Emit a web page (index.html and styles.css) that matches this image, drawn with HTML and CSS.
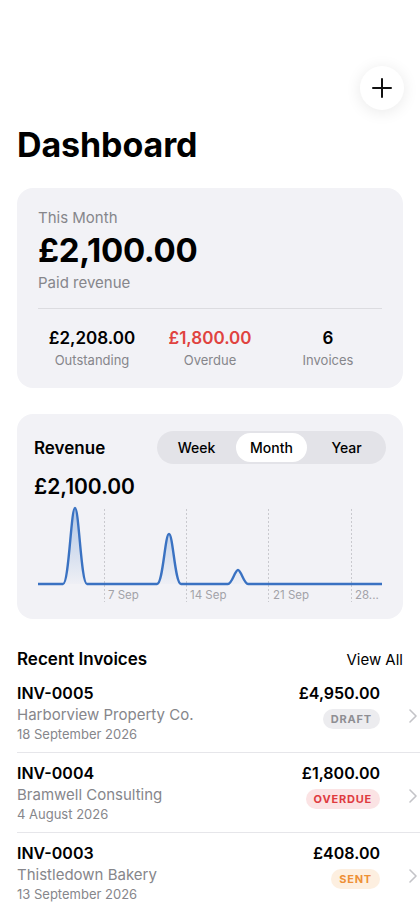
FILE: index.html
```html
<!doctype html>
<html lang="en">
    <head>
        <meta charset="UTF-8" />
        <meta name="viewport" content="width=device-width, initial-scale=1.0" />
        <title>Dashboard</title>
        <link rel="stylesheet" href="styles.css">
    </head>
    <body>
        <div class="page">
            <div class="top-bar">
                <button class="add-btn" aria-label="New invoice">
                    <svg width="22" height="22" viewBox="0 0 22 22">
                        <path d="M11 2v18M2 11h18" stroke="#111" stroke-width="2" stroke-linecap="round" />
                    </svg>
                </button>
            </div>

            <h1 class="title">Dashboard</h1>

            <div class="card summary">
                <div class="summary-top">
                    <p class="muted">This Month</p>
                    <p class="big-amount">£2,100.00</p>
                    <p class="muted">Paid revenue</p>
                </div>
                <div class="divider"></div>
                <div class="stats">
                    <div class="stat">
                        <span class="stat-value">£2,208.00</span>
                        <span class="stat-label">Outstanding</span>
                    </div>
                    <div class="stat">
                        <span class="stat-value red">£1,800.00</span>
                        <span class="stat-label">Overdue</span>
                    </div>
                    <div class="stat">
                        <span class="stat-value">6</span>
                        <span class="stat-label">Invoices</span>
                    </div>
                </div>
            </div>

            <div class="card revenue">
                <div class="revenue-head">
                    <h2 class="card-title">Revenue</h2>
                    <div class="segmented">
                        <span class="seg">Week</span>
                        <span class="seg active">Month</span>
                        <span class="seg">Year</span>
                    </div>
                </div>
                <p class="chart-total">£2,100.00</p>
                <svg class="chart" width="352" height="106" viewBox="0 0 352 106">
                    <defs>
                        <linearGradient id="fill" x1="0" y1="0" x2="0" y2="1">
                            <stop offset="0" stop-color="#3a76c6" stop-opacity="0.35" />
                            <stop offset="1" stop-color="#3a76c6" stop-opacity="0.02" />
                        </linearGradient>
                    </defs>
                    <g stroke="#c9c9ce" stroke-width="1" stroke-dasharray="2 2">
                        <line x1="70.5" y1="8" x2="70.5" y2="101" />
                        <line x1="152.5" y1="8" x2="152.5" y2="101" />
                        <line x1="234.5" y1="8" x2="234.5" y2="101" />
                        <line x1="317.5" y1="8" x2="317.5" y2="101" />
                    </g>
                    <path fill="url(#fill)" d="M29 83C35 83 37 7 41 7C45 7 47 83 53 83ZM123 83C129 83 131 33 135 33C139 33 141 83 147 83ZM194 83C198 83 201 69 204 69C207 69 210 83 214 83Z" />
                    <path fill="none" stroke="#3a72c2" stroke-width="2.4" stroke-linejoin="round" d="M4 83L29 83C35 83 37 7 41 7C45 7 47 83 53 83L123 83C129 83 131 33 135 33C139 33 141 83 147 83L194 83C198 83 201 69 204 69C207 69 210 83 214 83L348 83" />
                    <g class="axis">
                        <text x="74" y="98">7 Sep</text>
                        <text x="156" y="98">14 Sep</text>
                        <text x="239" y="98">21 Sep</text>
                        <text x="321" y="98">28...</text>
                    </g>
                </svg>
            </div>

            <div class="section-head">
                <h2 class="section-title">Recent Invoices</h2>
                <span class="view-all">View All</span>
            </div>

            <div class="invoice-list">
                <div class="invoice">
                    <div class="inv-main">
                        <span class="inv-number">INV-0005</span>
                        <span class="inv-client">Harborview Property Co.</span>
                        <span class="inv-date">18 September 2026</span>
                    </div>
                    <div class="inv-side">
                        <span class="inv-amount">£4,950.00</span>
                        <span class="badge draft">DRAFT</span>
                    </div>
                    <span class="chevron">
                        <svg width="8" height="14" viewBox="0 0 8 14"><path d="M1 1l6 6-6 6" fill="none" stroke="#c4c4c8" stroke-width="1.6" stroke-linecap="round" stroke-linejoin="round" /></svg>
                    </span>
                </div>
                <div class="invoice">
                    <div class="inv-main">
                        <span class="inv-number">INV-0004</span>
                        <span class="inv-client">Bramwell Consulting</span>
                        <span class="inv-date">4 August 2026</span>
                    </div>
                    <div class="inv-side">
                        <span class="inv-amount">£1,800.00</span>
                        <span class="badge overdue">OVERDUE</span>
                    </div>
                    <span class="chevron">
                        <svg width="8" height="14" viewBox="0 0 8 14"><path d="M1 1l6 6-6 6" fill="none" stroke="#c4c4c8" stroke-width="1.6" stroke-linecap="round" stroke-linejoin="round" /></svg>
                    </span>
                </div>
                <div class="invoice">
                    <div class="inv-main">
                        <span class="inv-number">INV-0003</span>
                        <span class="inv-client">Thistledown Bakery</span>
                        <span class="inv-date">13 September 2026</span>
                    </div>
                    <div class="inv-side">
                        <span class="inv-amount">£408.00</span>
                        <span class="badge sent">SENT</span>
                    </div>
                    <span class="chevron">
                        <svg width="8" height="14" viewBox="0 0 8 14"><path d="M1 1l6 6-6 6" fill="none" stroke="#c4c4c8" stroke-width="1.6" stroke-linecap="round" stroke-linejoin="round" /></svg>
                    </span>
                </div>
            </div>
        </div>
    </body>
</html>
```

FILE: styles.css
```css
body {
    font-family: Inter, "Noto Sans", sans-serif;
    margin: 0;
    padding: 0;
    background-color: #ffffff;
    color: #000000;
    overflow: hidden;
}

p,
h1,
h2 {
    margin: 0;
}

.page {
    padding: 0 17px;
}

.top-bar {
    display: flex;
    justify-content: flex-end;
    padding-top: 66px;
}
.add-btn {
    width: 44px;
    height: 44px;
    margin-right: -1px;
    border: none;
    border-radius: 50%;
    background: #ffffff;
    box-shadow: 0 2px 16px rgba(0, 0, 0, 0.09);
    display: flex;
    align-items: center;
    justify-content: center;
    padding: 0;
}

.title {
    margin-top: 13px;
    font-size: 34px;
    line-height: 44px;
    font-weight: 700;
    letter-spacing: -0.1px;
}

.card {
    background-color: #f2f2f6;
    border-radius: 16px;
}

.summary {
    margin-top: 21px;
    padding: 20px 16px 20px;
}
.summary-top {
    padding: 0 5px;
}
.muted {
    font-size: 15px;
    line-height: 20px;
    color: #86868b;
}
.big-amount {
    margin: 2px 0 2px;
    font-size: 33px;
    line-height: 41px;
    font-weight: 700;
    letter-spacing: -0.3px;
}
.divider {
    height: 1px;
    margin: 15px 5px 18px;
    background-color: #dcdce0;
}
.stats {
    display: grid;
    grid-template-columns: 1fr 1fr 1fr;
}
.stat {
    display: flex;
    flex-direction: column;
    align-items: center;
}
.stat-value {
    font-size: 17px;
    line-height: 22px;
    font-weight: 600;
}
.stat-value.red {
    color: #e0433f;
}
.stat-label {
    margin-top: 3px;
    font-size: 13px;
    line-height: 16px;
    color: #86868b;
}

.revenue {
    margin-top: 26px;
    padding: 17px 17px 12px;
}
.revenue-head {
    display: flex;
    align-items: center;
    justify-content: space-between;
}
.card-title {
    font-size: 17px;
    font-weight: 600;
}
.segmented {
    display: grid;
    grid-template-columns: 1fr 1fr 1fr;
    width: 229px;
    height: 33px;
    padding: 2px;
    box-sizing: border-box;
    border-radius: 17px;
    background-color: #e3e3e8;
}
.seg {
    display: flex;
    align-items: center;
    justify-content: center;
    font-size: 14px;
    font-weight: 500;
    border-radius: 15px;
}
.seg.active {
    background-color: #ffffff;
    margin: 0 2px;
}
.chart-total {
    margin-top: 10px;
    font-size: 21px;
    line-height: 26px;
    font-weight: 600;
}
.chart {
    display: block;
    margin-top: 1px;
}
.axis text {
    font-family: Inter, sans-serif;
    font-size: 11.5px;
    fill: #a2a2a8;
}

.section-head {
    display: flex;
    align-items: center;
    justify-content: space-between;
    margin-top: 28px;
    height: 24px;
}
.section-title {
    font-size: 17px;
    font-weight: 600;
}
.view-all {
    font-size: 15px;
}

.invoice-list {
    margin-top: 2px;
    margin-right: -17px;
}
.invoice {
    display: flex;
    align-items: flex-start;
    padding: 10px 0 9px;
    border-bottom: 1px solid #e6e6ea;
}
.invoice:last-child {
    border-bottom: none;
}
.inv-main {
    flex: 1;
    display: flex;
    flex-direction: column;
}
.inv-number {
    font-size: 16px;
    line-height: 20px;
    font-weight: 600;
}
.inv-client {
    margin-top: 2px;
    font-size: 15px;
    line-height: 20px;
    color: #86868b;
}
.inv-date {
    font-size: 13px;
    line-height: 18px;
    color: #86868b;
}
.inv-side {
    display: flex;
    flex-direction: column;
    align-items: flex-end;
}
.inv-amount {
    font-size: 16px;
    line-height: 20px;
    font-weight: 600;
}
.badge {
    margin-top: 6px;
    padding: 0 8px;
    height: 20px;
    line-height: 20px;
    border-radius: 10px;
    font-size: 11px;
    font-weight: 700;
    letter-spacing: 0.8px;
}
.badge.draft {
    background-color: #ececef;
    color: #8e8e93;
}
.badge.overdue {
    background-color: #fbe3e4;
    color: #df3b3f;
}
.badge.sent {
    background-color: #fdefe0;
    color: #ee9036;
}
.chevron {
    display: flex;
    width: 40px;
    padding-left: 29px;
    box-sizing: border-box;
    margin-top: 26px;
}
```
